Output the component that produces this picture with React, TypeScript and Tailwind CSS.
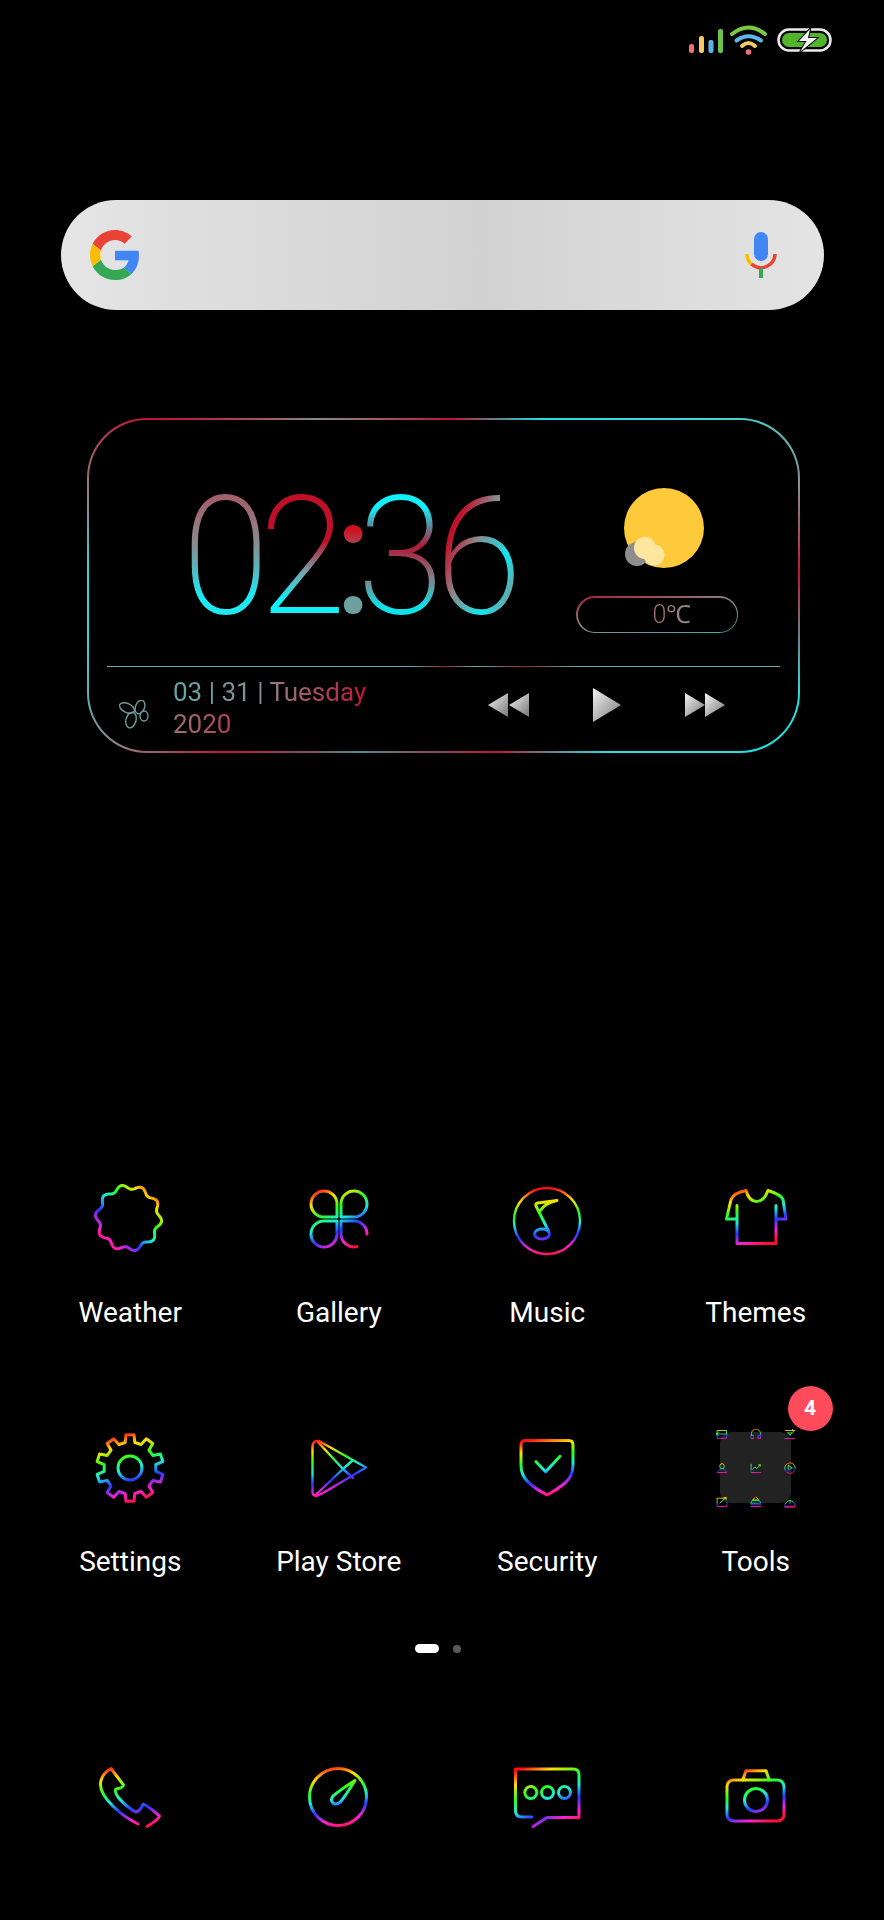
import React from "react";

const STOPS: [string, string][] = [
  ["0", "#ff1018"], ["0.17", "#ffe000"], ["0.36", "#28ff20"], ["0.52", "#20e8e0"],
  ["0.68", "#2838ff"], ["0.85", "#ff20d0"], ["1", "#ff1030"],
];

function Icon({ id, g = [30, 8, 50, 72], dx = 0, dy = 0, w = 3, size = 80, children }: {
  id: string; g?: number[]; dx?: number; dy?: number; w?: number; size?: number; children: React.ReactNode;
}) {
  return (
    <svg width={size} height={size} viewBox="0 0 80 80" className="block shrink-0 overflow-visible" fill="none">
      <defs>
        <linearGradient id={id} gradientUnits="userSpaceOnUse" x1={g[0]} y1={g[1]} x2={g[2]} y2={g[3]}>
          {STOPS.map(([o, c]) => <stop key={o} offset={o} stopColor={c} />)}
        </linearGradient>
      </defs>
      <g transform={`translate(${dx} ${dy})`} stroke={`url(#${id})`} strokeWidth={w} strokeLinecap="round" strokeLinejoin="round">
        {children}
      </g>
    </svg>
  );
}

const wavy = (() => {
  const pts: string[] = [];
  for (let i = 0; i <= 240; i++) {
    const t = (i / 240) * Math.PI * 2;
    const r = 31 + 2.2 * Math.sin(10 * t + 0.6);
    pts.push(`${(40 + r * Math.cos(t)).toFixed(2)} ${(40 + r * Math.sin(t)).toFixed(2)}`);
  }
  return "M" + pts.join("L") + "Z";
})();

const gear = (() => {
  const n = 10, R = 33.5, r = 26;
  const pts: string[] = [];
  for (let i = 0; i < n; i++) {
    const a = (i / n) * Math.PI * 2 - Math.PI / 2;
    const s = (Math.PI * 2) / n;
    const list: [number, number][] = [[r, -0.3 * s], [R, -0.19 * s], [R, 0.19 * s], [r, 0.3 * s]];
    list.forEach(([rad, off]) => {
      pts.push(`${(40 + rad * Math.cos(a + off)).toFixed(2)} ${(40 + rad * Math.sin(a + off)).toFixed(2)}`);
    });
  }
  return "M" + pts.join("L") + "Z";
})();

const Weather = () => <Icon id="i-weather" g={[72, 14, 16, 72]} dx={-1.5} dy={-1}><path d={wavy} /></Icon>;
const Gallery = () => (
  <Icon id="i-gallery" g={[20, 10, 50, 72]}>
    <path d="M38 38H25A13 13 0 1 1 38 25Z" />
    <path d="M42 38V25A13 13 0 1 1 55 38Z" />
    <path d="M38 42H25A13 13 0 1 0 38 55Z" />
    <path d="M42 42H55A13 13 0 0 1 68 55M42 42V55A13 13 0 0 0 58 67.6" />
  </Icon>
);
const Music = () => (
  <Icon id="i-music" g={[38, 8, 42, 76]} dy={2} w={2.4}>
    <circle cx="40" cy="40" r="33" />
    <g strokeWidth={3}>
      <path d="M41.5 50L29 25Q28 22.5 31 22L50 19.5Q38 22 33 30" />
      <ellipse cx="35" cy="53" rx="7.5" ry="5" />
    </g>
  </Icon>
);
const Shirt = () => (
  <Icon id="i-shirt" g={[24, 10, 46, 68]} dy={-1.5}>
    <path d="M21 28V66H60V28M60 41.5H70L67 22Q65 17 52 13Q48 24 40.5 24Q33 24 30 13Q18 15 15 22L10.5 41.5H21" />
  </Icon>
);
const Settings = () => (
  <Icon id="i-settings" g={[30, 6, 48, 74]}>
    <path d={gear} />
    <circle cx="40" cy="40" r="12" />
  </Icon>
);
const Play = () => (
  <Icon id="i-play" g={[26, 10, 40, 70]} w={2.4}>
    <path d="M13.5 18Q14 12 20 13L67 39.5L24 65L17.5 68Q13.5 68 13.5 64Z" />
    <path d="M18 13L44 41L16.5 67M44 41L54 32M44 41L54 50" />
  </Icon>
);
const Shield = () => (
  <Icon id="i-shield" g={[32, 10, 46, 70]}>
    <path d="M18 12.5H62Q66 12.5 66 17V37Q66 48 58 55Q50 62 40 67Q30 62 22 55Q14 48 14 37V17Q14 12.5 18 12.5Z" />
    <path d="M29 33.7L38.7 43.7L53 28.3" />
  </Icon>
);
const Phone = () => (
  <Icon id="i-phone" g={[28, 8, 42, 74]}>
    <path d="M48 67C30 58 10 40 10.5 27Q11 17 21 11.5L33.5 28Q33 31 26 32Q24 34 28 40Q36 50 46 55Q50 54 53 47.5Q56 47 69.5 59Q68 63 57 69.5" />
  </Icon>
);
const Compass = () => (
  <Icon id="i-compass" g={[34, 9, 46, 72]} dx={-1}>
    <circle cx="40" cy="40" r="28.5" />
    <path d="M57 23.5Q48 38 42.5 45Q38 48.5 35 46Q32 43 35 39Q42 33 57 23.5Z" />
  </Icon>
);
const Message = () => (
  <Icon id="i-message" g={[22, 8, 52, 74]} dy={0.5}>
    <path d="M8.5 11.5H66Q72 11.5 72 17V60H40L26 69M25 59.5H15Q8.5 59.5 8.5 53V11.5" />
    <circle cx="23.8" cy="35" r="6" />
    <circle cx="40.5" cy="35" r="6" />
    <circle cx="57.5" cy="35" r="6" />
  </Icon>
);
const Camera = () => (
  <Icon id="i-camera" g={[28, 12, 50, 68]} dy={-1}>
    <rect x="11" y="24" width="57" height="41" rx="6.5" />
    <path d="M26.7 24L30 14.7H50L53.3 24" />
    <circle cx="40" cy="44" r="11.5" />
  </Icon>
);

const tiny: React.ReactNode[] = [
  <path key="a" d="M14 20H66V64H14ZM8 40H60M8 40L20 30M8 40L20 50" />,
  <path key="b" d="M14 48V38A26 26 0 0 1 66 38V48M14 48H26V66H14ZM54 48H66V66H54Z" />,
  <path key="c" d="M12 20H68M12 66H68M24 34H56M32 34L40 50L48 34M54 14L60 28" />,
  <path key="d" d="M40 14A12 15 0 0 1 40 46A12 15 0 0 1 40 14ZM32 44L12 66H68L48 44" />,
  <path key="e" d="M12 18V66H68M18 50L34 34L44 44L64 22M56 22H64V30" />,
  <path key="f" d="M40 10A30 30 0 1 1 39.9 10ZM32 26L54 40L32 54Z" />,
  <path key="g" d="M12 18H60M12 18V66H68V42M28 46L64 14M50 14H64V28" />,
  <path key="h" d="M40 10L56 28L24 28ZM20 32H60L68 48H12ZM12 56H68M12 66H68" />,
  <path key="i" d="M10 62A30 30 0 0 1 70 62ZM10 70H70M40 30V50" />,
];

const Tools = () => (
  <div className="w-[71px] h-[71px] mx-auto mt-[4px] rounded-[10px] bg-[#222222] flex items-center justify-center">
    <div className="grid grid-cols-3 gap-x-[20px] gap-y-[20px] shrink-0">
      {tiny.map((t, i) => (
        <Icon key={i} id={`i-tiny-${i}`} g={[36, 8, 44, 74]} w={5} size={14}>{t}</Icon>
      ))}
    </div>
  </div>
);

function App_({ label, children, badge }: { label: string; children: React.ReactNode; badge?: string }) {
  return (
    <div className="relative flex flex-col items-center">
      <div className="h-[80px] w-[80px]">{children}</div>
      <div className="mt-[36px] h-[36px] leading-[36px] text-[28px] text-white whitespace-nowrap">{label}</div>
      {badge && (
        <div className="absolute left-[136px] -top-[42px] w-[45px] h-[45px] rounded-full bg-[#fd4b5c] text-white font-bold text-[21px] flex items-center justify-center">
          {badge}
        </div>
      )}
    </div>
  );
}

function Digit({ ch, w, ml, cls }: { ch: string; w: string; ml: string; cls: string }) {
  return (
    <div className={`flex justify-center shrink-0 ${w} ${ml}`}>
      <span className={`inline-block shrink-0 w-[88px] tracking-[-14px] bg-clip-text text-transparent scale-x-[0.95] ${cls}`}>{ch}</span>
    </div>
  );
}

export default function App() {
  return (
    <div className="w-[884px] h-[1920px] bg-black overflow-hidden flex flex-col font-['Roboto',sans-serif]">
      {/* status bar */}
      <div className="h-[200px] flex items-start justify-end pr-[52px] pt-[25px]">
        <svg width="34" height="28" viewBox="0 0 34 28" className="block">
          <rect x="0" y="19" width="5" height="9" rx="2" fill="#f07070" />
          <rect x="10" y="11" width="5" height="17" rx="2" fill="#f4c862" />
          <rect x="19.5" y="15" width="5" height="13" rx="2" fill="#5cb4e8" />
          <rect x="29" y="4" width="5" height="24" rx="2" fill="#6cc24a" />
        </svg>
        <svg width="37" height="30" viewBox="0 0 37 30" fill="none" strokeLinecap="round" className="block ml-[7px]">
          <path d="M2 9Q18.5 -4 35 9" stroke="#7ac943" strokeWidth="4" />
          <path d="M6.5 15.5Q18.5 7 31 15.5" stroke="#5cb8ea" strokeWidth="4" />
          <path d="M12 21Q18.5 15 25 21" stroke="#f4c862" strokeWidth="4" />
          <circle cx="18.5" cy="27" r="2.8" fill="#f07070" />
        </svg>
        <svg width="55" height="24" viewBox="0 0 55 24" className="block ml-[10px] mt-[3px]">
          <rect x="1.5" y="1.5" width="52" height="21" rx="10.5" fill="none" stroke="#ececec" strokeWidth="2.5" />
          <rect x="5" y="5" width="45" height="14" rx="7" fill="#50b52a" />
          <path d="M33 1L22 13H29.5L23 24L40 10H31Z" fill="#f4f4f4" stroke="#000" strokeWidth="2" style={{ paintOrder: "stroke" }} />
        </svg>
      </div>

      {/* search */}
      <div className="ml-[61px] w-[763px] h-[110px] rounded-[55px] bg-[linear-gradient(90deg,#e6e6e6,#e0e0e0_12%,#d2d2d2_55%,#e4e4e4)] flex items-center justify-between pl-[29px] pr-[47px]">
        <svg width="50" height="50" viewBox="0 0 48 48" className="block">
          <path fill="#4285F4" d="M46.98 24.55c0-1.57-.15-3.09-.38-4.55H24v9.02h12.94c-.58 2.96-2.26 5.48-4.78 7.18l7.73 6c4.51-4.18 7.09-10.36 7.09-17.65z" />
          <path fill="#34A853" d="M24 48c6.48 0 11.93-2.13 15.89-5.81l-7.73-6c-2.15 1.45-4.92 2.3-8.16 2.3-6.26 0-11.57-4.22-13.47-9.91l-7.98 6.19C6.51 42.62 14.62 48 24 48z" />
          <path fill="#FBBC05" d="M10.53 28.59c-.48-1.45-.76-2.99-.76-4.59s.27-3.14.76-4.59l-7.98-6.19C.92 16.46 0 20.12 0 24c0 3.88.92 7.54 2.56 10.78l7.97-6.19z" />
          <path fill="#EA4335" d="M24 9.5c3.54 0 6.71 1.22 9.21 3.6l6.85-6.85C35.9 2.38 30.47 0 24 0 14.62 0 6.51 5.38 2.56 13.22l7.98 6.19C12.43 13.72 17.74 9.5 24 9.5z" />
        </svg>
        <svg width="32" height="46" viewBox="0 0 32 46" fill="none" className="block">
          <rect x="9" y="0" width="14" height="29" rx="7" fill="#4285F4" />
          <path d="M2 22Q2 29 7 32.5" stroke="#FBBC05" strokeWidth="3.5" />
          <path d="M6.5 32Q16 40 25.5 32Q30 28 30 22" stroke="#EA4335" strokeWidth="3.5" />
          <rect x="14" y="36" width="4" height="10" fill="#34A853" />
        </svg>
      </div>

      {/* widget */}
      <div className="mt-[108px] ml-[87px] w-[713px] h-[335px] p-[2px] rounded-[60px] bg-[conic-gradient(#c01530_3deg,#20e0e0_31deg,#40d8d8_58deg,#8a8a8a_75deg,#c01530_88deg,#20e0e0_107deg,#20e0e0_135deg,#c01530_162deg,#508890_207deg,#c01530_233deg,#8a8a8a_245deg,#30d8d8_262deg,#30d8d8_272deg,#8a8a8a_283deg,#c01530_300deg,#8a8a8a_322deg,#c01530_363deg)]">
        <div className="w-full h-full rounded-[58px] bg-black flex flex-col">
          <div className="h-[246px] flex items-start pl-[102px]">
            <div className="mt-[69px] h-[136px] w-[329px] flex text-[166px] leading-[136px] font-extralight">
              <Digit ch="0" w="w-[70px]" ml="-ml-[2px]" cls="bg-[linear-gradient(180deg,#a0606c_8%,#8a8a8e_40%,#20e8f0_78%)]" />
              <Digit ch="2" w="w-[73px]" ml="ml-[5px]" cls="bg-[linear-gradient(180deg,#c01028_8%,#c01028_38%,#70a8b0_62%,#10f0f8_82%)]" />
              <div className="w-[10px] ml-[13px] shrink-0 flex justify-center">
                <span className="inline-block shrink-0 w-[44px] tracking-[-30px] font-normal bg-clip-text text-transparent bg-[linear-gradient(180deg,#d01020_30%,#6fa0a0_58%)]">:</span>
              </div>
              <Digit ch="3" w="w-[70px]" ml="ml-[4px]" cls="bg-[linear-gradient(180deg,#10f0f8_14%,#b01838_42%,#7a8890_68%,#10e0e8_86%)]" />
              <Digit ch="6" w="w-[76px]" ml="ml-[5px]" cls="bg-[linear-gradient(115deg,#c01028_25%,#8a8a8e_45%,#10e8f0_70%,#8a8a8e_90%)]" />
            </div>
            <div className="ml-[56px] mt-[68px] flex flex-col">
              <svg width="80" height="80" viewBox="0 0 80 80" className="block ml-[48px]">
                <circle cx="40" cy="40" r="40" fill="#ffc93c" />
                <circle cx="13" cy="66" r="12" fill="#8e8e8e" />
                <circle cx="21" cy="60" r="11" fill="#ffe6a0" />
                <circle cx="30" cy="67" r="10.5" fill="#ffe6a0" />
              </svg>
              <div className="mt-[28px] w-[162px] h-[37px] p-[1.5px] rounded-full bg-[linear-gradient(170deg,#a81c34,#8a8a8a_50%,#3fa8ac)]">
                <div className="w-full h-full rounded-full bg-black flex items-center pl-[75px]">
                  <span className="text-[25px] leading-[30px] font-light bg-clip-text text-transparent bg-[linear-gradient(90deg,#a06a72,#8c8c90)]">0℃</span>
                </div>
              </div>
            </div>
          </div>
          <div className="mx-[18px] h-px bg-[linear-gradient(90deg,#5fb0b4,#5fb0b4_45%,#a02030_50%,#5fb0b4_55%,#a02030_62%,#5fb0b4_70%)]" />
          <div className="flex-1 flex items-start pl-[29px] pr-[73px]">
            <svg width="32" height="29" viewBox="0 0 32 29" fill="none" stroke="#6f9a9c" strokeWidth="1.4" className="block mt-[33px]">
              <ellipse cx="9" cy="8" rx="8" ry="4.5" transform="rotate(25 9 8)" />
              <ellipse cx="22" cy="7" rx="4.5" ry="7" transform="rotate(20 22 7)" />
              <ellipse cx="26" cy="16" rx="4" ry="5" />
              <ellipse cx="13" cy="20" rx="5" ry="8" transform="rotate(15 13 20)" />
            </svg>
            <div className="ml-[23px] mt-[9px] flex flex-col text-[26px] leading-[32px] font-normal whitespace-nowrap">
              <span className="w-fit bg-clip-text text-transparent bg-[linear-gradient(90deg,#5fa8ac,#8a8a90_45%,#c01530)]">03 | 31 | Tuesday</span>
              <span className="w-fit bg-clip-text text-transparent bg-[linear-gradient(90deg,#a07078,#b04058)]">2020</span>
            </div>
            <div className="ml-auto mt-[21px] h-[34px] flex items-center gap-[64px]">
              <svg width="41" height="24" viewBox="0 0 41 24" className="block">
                <defs>
                  <linearGradient id="tr" x1="0" y1="0" x2="1" y2="1">
                    <stop offset="0" stopColor="#f4f4f4" />
                    <stop offset="1" stopColor="#777777" />
                  </linearGradient>
                </defs>
                <polygon points="20,0 0,12 20,24" fill="url(#tr)" />
                <polygon points="41,0 21,12 41,24" fill="url(#tr)" />
              </svg>
              <svg width="28" height="34" viewBox="0 0 28 34" className="block">
                <polygon points="0,0 28,17 0,34" fill="url(#tr)" />
              </svg>
              <svg width="40" height="24" viewBox="0 0 40 24" className="block">
                <polygon points="0,0 20,12 0,24" fill="url(#tr)" />
                <polygon points="20,0 40,12 20,24" fill="url(#tr)" />
              </svg>
            </div>
          </div>
        </div>
      </div>

      {/* apps */}
      <div className="mt-[426px] ml-[26px] w-[834px] grid grid-cols-4 gap-y-[97px]">
        <App_ label="Weather"><Weather /></App_>
        <App_ label="Gallery"><Gallery /></App_>
        <App_ label="Music"><Music /></App_>
        <App_ label="Themes"><Shirt /></App_>
        <App_ label="Settings"><Settings /></App_>
        <App_ label="Play Store"><Play /></App_>
        <App_ label="Security"><Shield /></App_>
        <App_ label="Tools" badge="4"><Tools /></App_>
      </div>

      {/* page dots */}
      <div className="mt-[64px] ml-[415px] flex items-center gap-[14px]">
        <div className="w-[24px] h-[9px] rounded-full bg-white" />
        <div className="w-[8px] h-[8px] rounded-full bg-[#5a5a5a]" />
      </div>

      {/* dock */}
      <div className="mt-[104px] ml-[26px] w-[834px] grid grid-cols-4 justify-items-center">
        <Phone />
        <Compass />
        <Message />
        <Camera />
      </div>
    </div>
  );
}
